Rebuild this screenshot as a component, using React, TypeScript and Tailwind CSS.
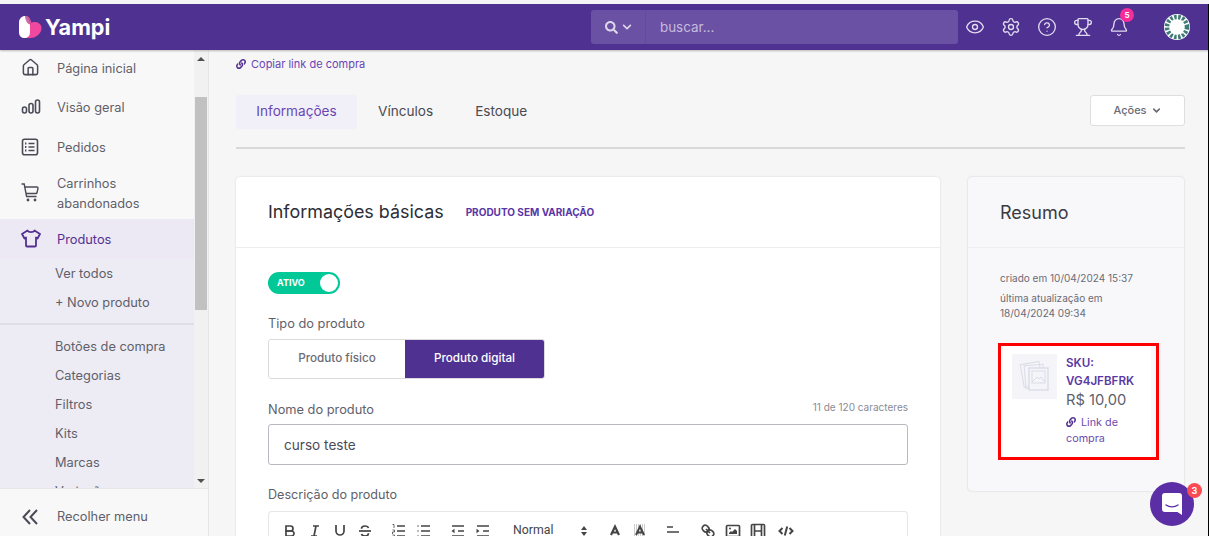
import React from "react";
import { House, ChevronDown, Eye, Settings, CircleHelp, Trophy, Bell } from "lucide-react";
import { FaLink, FaSearch, FaChevronDown } from "react-icons/fa";

const font = { fontFamily: "Inter, sans-serif" };

function Bars() {
  return (
    <svg width="20" height="16" viewBox="0 0 20 16" fill="none" stroke="#4b4b58" strokeWidth="1.6">
      <rect x="1.5" y="8" width="4" height="6" rx="2" />
      <rect x="8" y="4.5" width="4" height="9.5" rx="2" />
      <rect x="14.5" y="1" width="4" height="13" rx="2" />
    </svg>
  );
}

function Orders() {
  return (
    <svg width="18" height="18" viewBox="0 0 18 18" fill="none" stroke="#4b4b58" strokeWidth="1.6">
      <rect x="1.5" y="1.2" width="15" height="15.6" rx="2" />
      <path d="M7.5 5.5h6M7.5 9h6M7.5 12.5h6" />
      <path d="M4 5.5h1.4M4 9h1.4M4 12.5h1.4" strokeWidth="1.8" />
    </svg>
  );
}

function Cart() {
  return (
    <svg width="18" height="19" viewBox="0 0 18 19" fill="none" stroke="#4b4b58" strokeWidth="1.4">
      <path d="M0.5 1h2.7l2.4 12.5h10" />
      <path d="M3.6 4H16a1 1 0 0 1 1 1.2l-1 4.6a1 1 0 0 1-1 .7H5" />
      <circle cx="7" cy="17" r="0.7" fill="#4b4b58" />
      <circle cx="14" cy="17" r="0.7" fill="#4b4b58" />
    </svg>
  );
}

function Tee() {
  return (
    <svg width="20" height="19" viewBox="0 0 20 19" fill="none" stroke="#523192" strokeWidth="1.8" strokeLinejoin="round">
      <path d="M6.5 1.5C7.5 3.7 12.5 3.7 13.5 1.5L19 5l-2.5 4.5L15 8.5v8a1 1 0 0 1-1 1H6a1 1 0 0 1-1-1v-8L3.5 9.5 1 5z" />
    </svg>
  );
}

function Logo() {
  return (
    <svg width="23" height="23" viewBox="0 0 23 23">
      <path d="M0 6.500C0 2.500 3 0 6 0c3.500 0 5.500 3 5.500 6.500V22H6c-4 0-6-2-6-6z" fill="#fff" />
      <path d="M6 0c3.500 0 5.500 2.500 6 6.500 4-1.500 10.500 0 10.500 5.500 0 5.500-5.500 10-11 10H7c3-1 4-3 4-6V8C11 4 9 1 6 0z" fill="#f0489f" />
      <path d="M6 0c3 .5 5.500 3.500 5.500 7.500v1C9 8.500 6.500 6 6 0z" fill="#b5307f" opacity="0.7" />
    </svg>
  );
}

function Avatar() {
  return (
    <svg width="26" height="26" viewBox="0 0 26 26">
      <circle cx="13" cy="13" r="13" fill="#fff" />
      <circle cx="13" cy="13" r="10" fill="none" stroke="#3f7a74" strokeWidth="4.500" strokeDasharray="2.500 1.500" />
      <rect x="7" y="6.500" width="12" height="13" fill="#fff" />
    </svg>
  );
}

function NavItem({ icon, label, active, h = "h-[39.5px]" }: { icon: React.ReactNode; label: React.ReactNode; active?: boolean; h?: string }) {
  return (
    <div className={`flex items-center ${active ? "bg-[#ece9f4] text-[#523192]" : "text-[#5f5f6b]"} ${h} shrink-0`}>
      <div className="w-[57px] pl-[21px] shrink-0 flex">{icon}</div>
      <div className="text-[12.8px] leading-[20px] pt-[2px]">{label}</div>
    </div>
  );
}

function SubItem({ label }: { label: string }) {
  return <div className="h-[29px] pl-[55px] text-[12.8px] leading-[29px] text-[#5f5f6b] shrink-0">{label}</div>;
}

function Sidebar() {
  return (
    <aside className="w-[209px] shrink-0 bg-[#f8f8f8] border-r border-[#e6e6e6] flex flex-col h-full">
      <div className="flex-1 flex min-h-0">
        <div className="w-[194px] overflow-hidden flex flex-col">
          <div className="flex flex-col flex-1 min-h-0 -mt-[2px]">
            <NavItem icon={<House size={19} color="#4b4b58" strokeWidth={1.9} />} label="Página inicial" />
            <NavItem icon={<Bars />} label="Visão geral" />
            <NavItem icon={<Orders />} label="Pedidos" />
            <NavItem h="h-[52.5px]" icon={<Cart />} label={<>Carrinhos<br />abandonados</>} />
            <NavItem h="h-[39.5px]" active icon={<Tee />} label="Produtos" />
            <div className="bg-[#edecf4] flex-1 flex flex-col overflow-hidden">
              <SubItem label="Ver todos" />
              <SubItem label="+ Novo produto" />
              <div className="h-[2px] bg-[#dfdee6] mt-[6px] mb-[7px] shrink-0" />
              <SubItem label="Botões de compra" />
              <SubItem label="Categorias" />
              <SubItem label="Filtros" />
              <SubItem label="Kits" />
              <SubItem label="Marcas" />
              <SubItem label="Variações" />
            </div>
          </div>
        </div>
        <div className="w-[14px] bg-[#f1f1f1] flex flex-col items-center relative">
          <div className="h-[17px] flex items-center justify-center"><div className="w-0 h-0 border-x-[4px] border-x-transparent border-b-[4px] border-b-[#505050]" /></div>
          <div className="w-[12px] h-[213px] bg-[#c1c1c1] mt-[30px]" />
          <div className="absolute bottom-[5px] w-0 h-0 border-x-[4px] border-x-transparent border-t-[4px] border-t-[#505050]" />
        </div>
      </div>
      <div className="h-[48px] pt-[8px] border-t border-[#e6e6e6] flex items-center text-[#5f5f6b] shrink-0">
        <div className="w-[57px] pl-[22px] shrink-0">
          <svg width="16" height="16" viewBox="0 0 16 16" fill="none" stroke="#4b4b58" strokeWidth="2">
            <path d="M8 1L1.500 8 8 15M15 1L8.500 8 15 15" />
          </svg>
        </div>
        <span className="text-[12.8px]">Recolher menu</span>
      </div>
    </aside>
  );
}

function Header() {
  const ic = { size: 20, color: "#e2dcee", strokeWidth: 1.6 };
  return (
    <header className="h-[46px] bg-[#4f3192] flex items-center shrink-0 shadow-[0_1px_2px_rgba(0,0,0,0.25)] relative z-10">
      <div className="pl-[19px] flex items-center gap-[3px] w-[591px]">
        <Logo />
        <span className="text-white font-bold text-[21.600px] leading-none pt-[1px]">Yampi</span>
      </div>
      <div className="w-[367px] h-[34px] flex rounded-[3px] bg-[#6b51a4] overflow-hidden">
        <div className="w-[55px] flex items-center justify-center gap-[4px] border-r border-[#64499e]">
          <FaSearch size={13} color="#ddd6ea" />
          <FaChevronDown size={10} color="#ddd6ea" />
        </div>
        <div className="pl-[14px] pt-[1px] flex items-center text-[13.400px] text-[#c6bade]">buscar...</div>
      </div>
      <div className="flex items-center gap-[16px] ml-[7px]">
        <Eye {...ic} />
        <Settings {...ic} />
        <CircleHelp {...ic} />
        <Trophy {...ic} />
        <div className="relative">
          <Bell {...ic} />
          <span className="absolute -top-[9px] -right-[5px] w-[14px] h-[14px] rounded-full bg-[#f52d9a] text-white text-[8px] font-bold flex items-center justify-center">5</span>
        </div>
      </div>
      <div className="ml-[35px]"><Avatar /></div>
    </header>
  );
}

function Tabs() {
  return (
    <div className="flex items-start justify-between mt-[18px]">
      <div className="flex items-center text-[13.600px] text-[#4a4a52] font-normal">
        <div className="h-[34px] w-[121px] pb-[2px] flex items-center justify-center rounded-[3px] bg-[#f1f0f8] text-[#6a45b5]">Informações</div>
        <div className="ml-[21px] mb-[2px]">Vínculos</div>
        <div className="ml-[42px] mb-[2px]">Estoque</div>
      </div>
      <div className="w-[95px] h-[31px] bg-white border border-[#dedee2] rounded-[3px] flex items-center justify-center gap-[4px] text-[11px] font-medium text-[#6b6b76]">
        Ações <ChevronDown size={11} strokeWidth={3.500} />
      </div>
    </div>
  );
}

const S = { fill: "none", stroke: "#444", strokeWidth: 1.7 } as const;

function Q({ children, ml = "" }: { children: React.ReactNode; ml?: string }) {
  return (
    <div className={`w-[25px] h-[18px] flex justify-center shrink-0 ${ml}`}>
      <svg width="18" height="18" viewBox="0 0 18 18" {...S}>{children}</svg>
    </div>
  );
}

function Toolbar() {
  return (
    <div className="h-[40px] border border-[#e6e6e6] border-b-0 rounded-t-[4px] mt-[6px] bg-white flex items-start pt-[10px] pl-[8px]">
      <Q>
        <path d="M5,4H9.500A2.500,2.500,0,0,1,12,6.500A2.500,2.500,0,0,1,9.500,9H5Z" />
        <path d="M5,9h5.500A2.500,2.500,0,0,1,13,11.500A2.500,2.500,0,0,1,10.500,14H5Z" />
      </Q>
      <Q><path d="M7 4H13M5 14H11M8 14L10 4" /></Q>
      <Q>
        <path d="M5,3V9a4,4,0,0,0,8,0V3" />
        <path d="M3 15.500H15" />
      </Q>
      <Q>
        <path d="M3 9H15" />
        <path d="M12.500 6c-.5-1.500-2-2-3.500-2-2 0-3.500 1-3.500 2.700M12.500 11.300C12.500 13 11 14 9 14c-1.500 0-3-.5-3.500-2" />
      </Q>
      <Q ml="ml-[9px]">
        <path d="M7 4H15M7 9H15M7 14H15" />
        <path d="M2.500 2.500H4V6M2.500 8H4.500V10H2.500V12M2.500 13H4.500V16H2.500" strokeWidth="0.8" />
      </Q>
      <Q>
        <path d="M6 4H15M6 9H15M6 14H15" />
        <path d="M2.500 4H3.500M2.500 9H3.500M2.500 14H3.500" />
      </Q>
      <Q ml="ml-[9px]">
        <path d="M3 14H15M3 4H15M9 9H15" />
        <path d="M2.500 9L5.500 6.800V11.200Z" fill="#444" stroke="none" />
      </Q>
      <Q>
        <path d="M3 14H15M3 4H15M9 9H15" />
        <path d="M5.500 9L2.500 6.800V11.200Z" fill="#444" stroke="none" />
      </Q>
      <div className="ml-[18px] mt-[2px] w-[59px] text-[12.300px] leading-[12px] text-[#444]" style={{ fontFamily: "Roboto, sans-serif" }}>Normal</div>
      <div className="flex flex-col gap-[2px] mt-[4px] ml-[9px]">
        <div className="w-0 h-0 border-x-[3px] border-x-transparent border-b-[4px] border-b-[#444]" />
        <div className="w-0 h-0 border-x-[3px] border-x-transparent border-t-[4px] border-t-[#444]" />
      </div>
      <Q ml="ml-[15.500px]"><path d="M5 13L9 4.500L13 13M6.600 10.500H11.400" strokeWidth="2.200" /></Q>
      <Q>
        <g stroke="#9a9a9a" strokeWidth="1" strokeDasharray="1 1"><path d="M3 3H15M3 5H15M3 7H15M3 9H15M3 11H15M3 13H15M3 15H15" /></g>
        <path d="M5 13L9 4.500L13 13M6.600 10.500H11.400" strokeWidth="2" />
      </Q>
      <Q ml="ml-[7.500px]"><path d="M3 9H15M3 14H13M3 4H9" transform="translate(0 1)" /></Q>
      <Q ml="ml-[10px]">
        <path d="M7 7L11 11" />
        <path d="M8.900,4.577a3.476,3.476,0,0,1,.36,4.679A3.476,3.476,0,0,1,4.577,8.900C3.185,7.500,2.035,6.400,4.217,4.217S7.500,3.185,8.900,4.577Z" />
        <path d="M13.423,9.100a3.476,3.476,0,0,0-4.679-.36,3.476,3.476,0,0,0,.36,4.679c1.392,1.392,2.500,2.542,4.679.36S14.815,10.500,13.423,9.100Z" />
      </Q>
      <Q>
        <rect x="2.500" y="3.500" width="13" height="11" rx="1" />
        <path d="M5 12V11L7 9L8 10L11 7L13 9V12Z" fill="#444" stroke="none" />
        <circle cx="6" cy="6.500" r="1" fill="#444" stroke="none" />
      </Q>
      <Q>
        <rect x="2.500" y="2.500" width="13" height="13" rx="1" />
        <path d="M5.500 2.500V15.500M12.500 2.500V15.500M5.500 9H12.500" />
      </Q>
      <Q ml="ml-[3px]"><path d="M5.500 6L2.500 9L5.500 12M12.500 6L15.500 9L12.500 12M10.200 4.500L7.800 13.500" strokeWidth="2" /></Q>
    </div>
  );
}

function MainCard() {
  return (
    <section className="w-[704px] bg-white rounded-[4px] shadow-[0_0_2px_rgba(0,0,0,0.15)] shrink-0 h-[400px] overflow-hidden">
      <div className="h-[71px] border-b border-[#eeeeee] pl-[32px] flex items-center pt-[1px]">
        <h2 className="text-[17.900px] text-[#2d2d35]">Informações básicas</h2>
        <span className="ml-[22px] text-[10px] font-bold text-[#5b36a5]">PRODUTO SEM VARIAÇÃO</span>
      </div>
      <div className="px-[32px] pt-[24px]">
        <div className="w-[72px] h-[22px] rounded-full bg-[#00c896] flex items-center justify-between pl-[9px] pr-[2px]">
          <span className="text-white text-[9px] font-bold">ATIVO</span>
          <span className="w-[18px] h-[18px] rounded-full bg-white" />
        </div>
        <div className="mt-[20px] text-[12.800px] leading-[20px] text-[#5f5f6b]">Tipo do produto</div>
        <div className="flex mt-[5px] w-[277px] h-[40px] rounded-[3px] border border-[#d9d9de] overflow-hidden text-[11.700px] font-medium">
          <div className="w-[136px] bg-white flex items-center justify-center text-[#6b6b76]">Produto físico</div>
          <div className="flex-1 bg-[#4f3192] text-white flex items-center justify-center">Produto digital</div>
        </div>
        <div className="flex justify-between items-center mt-[20px] h-[20px]">
          <span className="text-[12.800px] text-[#5f5f6b] pt-[1px]">Nome do produto</span>
          <span className="text-[10px] text-[#8a8a94] mb-[4px]">11 de 120 caracteres</span>
        </div>
        <div className="mt-[5px] h-[41px] border border-[#b9b9c0] rounded-[3px] flex items-center pl-[15px] pt-[1px] text-[13.600px] text-[#4b4b58]">curso teste</div>
        <div className="mt-[20px] text-[12.600px] leading-[20px] text-[#5f5f6b]">Descrição do produto</div>
        <Toolbar />
      </div>
    </section>
  );
}

function Resumo() {
  return (
    <section className="w-[216px] h-[314px] bg-[#f8f8fa] rounded-[4px] shadow-[0_0_2px_rgba(0,0,0,0.2)] shrink-0">
      <div className="h-[71px] border-b border-[#eeeeee] pl-[32px] flex items-center text-[18px] text-[#3a3a44]">Resumo</div>
      <div className="pl-[32px] pt-[23px] text-[10px] leading-[15.500px] text-[#6b6b76]">
        <div>criado em 10/04/2024 15:37</div>
        <div className="mt-[4px]">última atualização em<br />18/04/2024 09:34</div>
      </div>
      <div className="ml-[30px] mt-[21px] w-[161px] h-[117px] border-[3px] border-[#ff0000] bg-[#f8f8fa]">
        <div className="w-[150px] h-full bg-white flex pl-[11px] pt-[8.500px]">
          <div className="w-[45px] h-[45px] bg-[#f4f4f9] flex items-center justify-center shrink-0">
            <svg width="34" height="32" viewBox="0 0 34 32" fill="none" stroke="#dcdce8" strokeWidth="1">
              <rect x="4" y="2" width="19" height="23" transform="rotate(-10 13 13)" />
              <rect x="7" y="4" width="19" height="23" transform="rotate(-5 16 15)" />
              <rect x="11" y="7" width="19" height="22" fill="#f4f4f9" strokeWidth="1.400" />
              <rect x="14" y="10" width="13" height="12" />
              <path d="M14 21l5-5 2 2 2-2 4 5" />
            </svg>
          </div>
          <div className="ml-[9px]">
            <div className="text-[11.600px] leading-[18px] font-semibold text-[#5b36a5]">SKU:<br />VG4JFBFRK</div>
            <div className="text-[14.700px] leading-[20px] text-[#5f5f6b]">R$ 10,00</div>
            <div className="text-[10.800px] leading-[16px] mt-[5px] text-[#6d4bb0] w-[70px]">
              <FaLink size={10} className="inline mr-[5px] text-[#523192] align-[-1px]" />Link de compra
            </div>
          </div>
        </div>
      </div>
    </section>
  );
}

export default function App() {
  return (
    <div className="w-[1209px] h-[536px] overflow-hidden bg-[#f6f6f6] flex flex-col relative border-t-[4px] border-[#f4f4f6]" style={font}>
      <Header />
      <div className="flex flex-1 min-h-0">
        <Sidebar />
        <main className="flex-1 min-w-0 pl-[27px] pr-[24px] overflow-hidden">
          <div className="flex items-center gap-[5px] h-[27px] pt-[1px] text-[11px] text-[#6a45b5]">
            <FaLink size={10} className="text-[#523192]" />
            Copiar link de compra
          </div>
          <Tabs />
          <div className="h-[2px] bg-[#d9d9d9] mt-[18px]" />
          <div className="flex gap-[28px] mt-[28px]">
            <MainCard />
            <Resumo />
          </div>
        </main>
      </div>
      <div className="absolute left-[1150px] top-[478px] w-[44px] h-[44px] rounded-full bg-[#5b2ea6] flex items-center justify-center">
        <svg width="20" height="23" viewBox="0 0 20 23">
          <path d="M3 0h14a3 3 0 0 1 3 3v19l-4.500-3H3a3 3 0 0 1-3-3V3a3 3 0 0 1 3-3z" fill="#fff" />
          <path d="M4 12c3.500 2.500 8.500 2.500 12 0" stroke="#5b2ea6" strokeWidth="1.400" fill="none" strokeLinecap="round" />
        </svg>
      </div>
      <div className="absolute left-[1187px] top-[479px] w-[15px] h-[15px] rounded-full bg-[#fa4b52] text-white text-[9px] font-bold flex items-center justify-center">3</div>
      <div className="absolute right-0 -top-[4px] bottom-0 w-[1px] bg-black z-20" />
    </div>
  );
}
